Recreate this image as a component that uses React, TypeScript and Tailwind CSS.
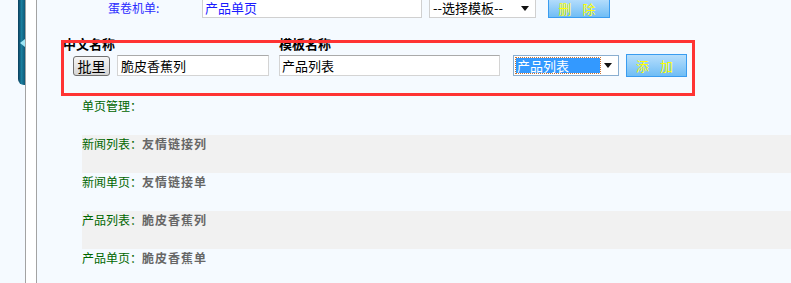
import React from 'react';

const font = { fontFamily: '"Noto Sans CJK SC", "Noto Sans", sans-serif' };

const rows = [
  { label: '单页管理：', value: '', shaded: false },
  { label: '新闻列表：', value: '友情链接列', shaded: true },
  { label: '新闻单页：', value: '友情链接单', shaded: false },
  { label: '产品列表：', value: '脆皮香蕉列', shaded: true },
  { label: '产品单页：', value: '脆皮香蕉单', shaded: false },
];

function Arrow() {
  return (
    <svg width="8" height="5" viewBox="0 0 8 5" className="shrink-0">
      <path d="M0 0h8L4 5z" fill="#111" />
    </svg>
  );
}

export default function App() {
  return (
    <div className="w-[791px] h-[283px] overflow-hidden bg-[#f5faff] flex text-[12px] text-black" style={font}>
      {/* left gutter */}
      <div className="w-[18px] shrink-0" />
      <div className="w-[7px] shrink-0">
        <div className="h-[85px] rounded-bl-[6px] bg-linear-to-r from-[#0a3d5c] via-[#1b7f9e] to-[#0f5877] flex items-center justify-end">
          <svg width="5" height="8" viewBox="0 0 5 8">
            <path d="M5 0v8L0 4z" fill="#9fe6f5" />
          </svg>
        </div>
      </div>
      <div className="w-[12px] shrink-0 bg-white border-x border-[#a3a3a3]" />

      {/* content */}
      <div className="flex-1 relative">
        {/* top row */}
        <div className="flex items-center h-[20px] -mt-[2px]">
          <span className="ml-[71px] w-[94px] text-[#2b2bff]">蛋卷机单:</span>
          <div className="w-[220px] h-[20px] bg-white border border-[#d0d0d0] border-t-[#b0b0b0] px-[2px] flex items-center text-[13px] text-[#1a1aff]">
            产品单页
          </div>
          <div className="ml-[7px] w-[107px] h-[20px] bg-white border border-[#d0d0d0] flex items-center justify-between pl-[3px] pr-[6px] text-[13px]">
            <span>--选择模板--</span>
            <Arrow />
          </div>
          <button className="ml-[12px] w-[62px] h-[20px] border border-[#3a9cf0] bg-linear-to-b from-[#b6defc] to-[#6fbdf5] text-[#ffff00] text-[13px] tracking-[4px]">
            删 除
          </button>
        </div>

        {/* labels */}
        <div className="flex mt-[19px] h-[14px] leading-[14px] font-bold text-[13px]">
          <span className="ml-[26px] w-[216px]">中文名称</span>
          <span>模板名称</span>
        </div>

        {/* form row */}
        <div className="flex items-center mt-[3px] h-[23px]">
          <button className="ml-[36px] w-[37px] h-[20px] rounded-[3px] border border-[#707070] bg-linear-to-b from-[#f6f6f6] to-[#d6d6d6] text-[14px] leading-[18px]">
            批里
          </button>
          <div className="ml-[7px] w-[152px] h-[21px] bg-white border border-[#d4d4d4] border-t-[#aaaaaa] px-[3px] flex items-center text-[13px]">
            脆皮香蕉列
          </div>
          <div className="ml-[10px] w-[221px] h-[21px] bg-white border border-[#d4d4d4] border-t-[#aaaaaa] px-[2px] flex items-center text-[13px]">
            产品列表
          </div>
          <div className="ml-[13px] w-[106px] h-[21px] bg-white border border-[#8aaed0] flex items-center justify-between pl-[2px] pr-[6px]">
            <span className="w-[84px] h-[15px] bg-[#3399ff] outline outline-dotted outline-[#c87030] text-white text-[13px] leading-[15px] pl-[1px]">
              产品列表
            </span>
            <Arrow />
          </div>
          <button className="ml-[7px] w-[61px] h-[23px] border border-[#3a9cf0] bg-linear-to-b from-[#b6defc] to-[#6fbdf5] text-[#ffff00] text-[13px] tracking-[4px]">
            添 加
          </button>
        </div>

        {/* list */}
        <div className="mt-[20px] ml-[45px]">
          {rows.map((r) => (
            <div key={r.label} className={`h-[38px] pt-[2px] leading-[14px] ${r.shaded ? 'bg-[#f1f1f1]' : ''}`}>
              <span className="text-[#006600]">{r.label}</span>
              <span className="font-bold text-[#666666] tracking-[1px]">{r.value}</span>
            </div>
          ))}
        </div>

        {/* annotation box */}
        <div className="absolute left-[24px] top-[40px] w-[634px] h-[56px] border-[3px] border-[#ff3333] pointer-events-none" />
      </div>
    </div>
  );
}
